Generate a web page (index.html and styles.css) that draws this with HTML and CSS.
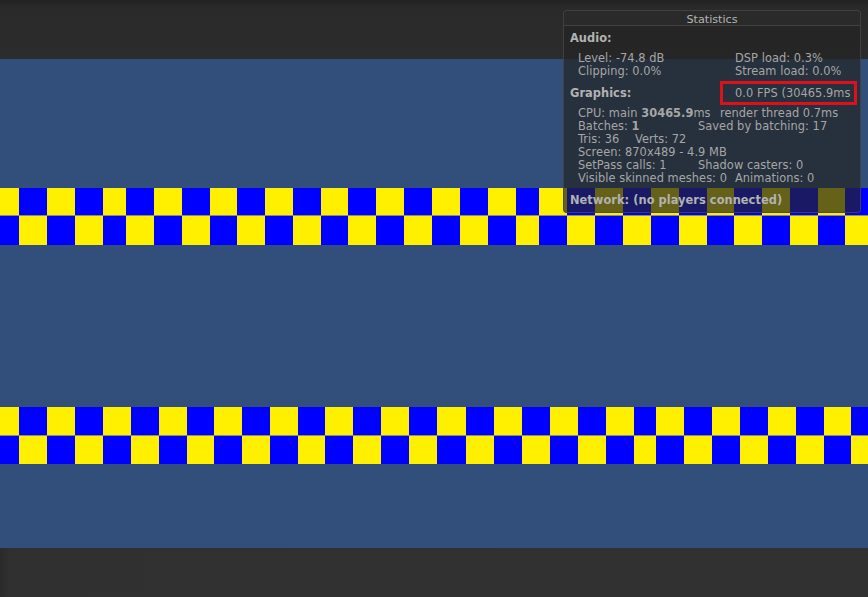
FILE: index.html
```html
<!DOCTYPE html>
<html lang="en">
<head>
<meta charset="utf-8">
<title>Game View - Statistics</title>
<link rel="stylesheet" href="styles.css">
</head>
<body>
<div class="app">
  <div class="topbar"></div>
  <div class="viewport">
    <div class="stripe stripe-a">
      <div class="row row-1"></div>
      <div class="row row-2"></div>
    </div>
    <div class="stripe stripe-b">
      <div class="row row-1"></div>
      <div class="row row-2"></div>
    </div>
  </div>
  <div class="bottombar"></div>

  <div class="stats">
    <div class="stats-title">Statistics</div>
    <div class="stats-body">
      <div class="heading">Audio:</div>
      <div class="block audio">
        <div class="cols cols-audio"><span>Level: -74.8 dB</span><span>DSP load: 0.3%</span></div>
        <div class="cols cols-audio"><span>Clipping: 0.0%</span><span>Stream load: 0.0%</span></div>
      </div>
      <div class="heading-row"><span class="heading">Graphics:</span><span class="fps">0.0 FPS (30465.9ms</span></div>
      <div class="block graphics">
        <div class="cols cols-cpu"><span>CPU: main <b>30465.9</b>ms</span><span>render thread 0.7ms</span></div>
        <div class="cols cols-batch"><span>Batches: <b>1</b></span><span>Saved by batching: 17</span></div>
        <div class="cols cols-tris"><span>Tris: 36</span><span>Verts: 72</span></div>
        <div class="line">Screen: 870x489 - 4.9 MB</div>
        <div class="cols cols-batch"><span>SetPass calls: 1</span><span>Shadow casters: 0</span></div>
        <div class="cols cols-skin"><span>Visible skinned meshes: 0</span><span>Animations: 0</span></div>
      </div>
      <div class="heading network">Network: (no players connected)</div>
    </div>
    <div class="highlight"></div>
  </div>
</div>
</body>
</html>
```

FILE: styles.css
```css
html, body {
  margin: 0;
  padding: 0;
  background: #2b2b2b;
}

.app {
  position: relative;
  width: 868px;
  height: 597px;
  display: flex;
  flex-direction: column;
  overflow: hidden;
  font-family: "DejaVu Sans", "Verdana", sans-serif;
}

.topbar {
  height: 59px;
  background: linear-gradient(to bottom, #222222 0, #2a2a2a 8px, #2c2c2c 100%);
}

.viewport {
  height: 489px;
  background: #314f7a;
  display: flex;
  flex-direction: column;
  padding-top: 129px;
  box-sizing: border-box;
}

.bottombar {
  flex: 1;
  background: linear-gradient(to right, #2a2a2a 0, #303030 10px, #313131 100%);
}

.stripe {
  display: flex;
  flex-direction: column;
  --y: #fff000;
  --b: #0000ff;
}

.stripe-b {
  margin-top: 162px;
}

.row-1 { --c1: var(--y); --c2: var(--b); }
.row-2 { --c1: var(--b); --c2: var(--y); }

.stripe-a .row-1 { height: 27px; border-bottom: 1px solid #8c8c70; }
.stripe-a .row-2 { height: 29px; }
.stripe-b .row-1 { height: 28px; border-bottom: 1px solid #8c8c70; }
.stripe-b .row-2 { height: 28px; }

.stripe-a .row {
  background: linear-gradient(to right,
    var(--c1) 0 19px, var(--c2) 19px 47px, var(--c1) 47px 75px, var(--c2) 75px 103px,
    var(--c1) 103px 126px, var(--c2) 126px 154px, var(--c1) 154px 182px, var(--c2) 182px 210px,
    var(--c1) 210px 237px, var(--c2) 237px 265px, var(--c1) 265px 293px, var(--c2) 293px 321px,
    var(--c1) 321px 348px, var(--c2) 348px 376px, var(--c1) 376px 404px, var(--c2) 404px 432px,
    var(--c1) 432px 460px, var(--c2) 460px 488px, var(--c1) 488px 516px, var(--c2) 516px 539px,
    var(--c1) 539px 567px, var(--c2) 567px 595px, var(--c1) 595px 623px, var(--c2) 623px 651px,
    var(--c1) 651px 679px, var(--c2) 679px 707px, var(--c1) 707px 734px, var(--c2) 734px 762px,
    var(--c1) 762px 790px, var(--c2) 790px 818px, var(--c1) 818px 845px, var(--c2) 845px 868px);
}

.stripe-b .row {
  background: linear-gradient(to right,
    var(--c1) 0 19px, var(--c2) 19px 47px, var(--c1) 47px 75px, var(--c2) 75px 103px,
    var(--c1) 103px 131px, var(--c2) 131px 159px, var(--c1) 159px 187px, var(--c2) 187px 214px,
    var(--c1) 214px 242px, var(--c2) 242px 270px, var(--c1) 270px 298px, var(--c2) 298px 325px,
    var(--c1) 325px 353px, var(--c2) 353px 381px, var(--c1) 381px 409px, var(--c2) 409px 437px,
    var(--c1) 437px 466px, var(--c2) 466px 494px, var(--c1) 494px 522px, var(--c2) 522px 550px,
    var(--c1) 550px 578px, var(--c2) 578px 606px, var(--c1) 606px 634px, var(--c2) 634px 656px,
    var(--c1) 656px 684px, var(--c2) 684px 712px, var(--c1) 712px 740px, var(--c2) 740px 768px,
    var(--c1) 768px 796px, var(--c2) 796px 824px, var(--c1) 824px 851px, var(--c2) 851px 868px);
}

/* Statistics overlay */
.stats {
  position: absolute;
  left: 563px;
  top: 10px;
  width: 298px;
  height: 203px;
  box-sizing: border-box;
  border: 1px solid rgba(70, 70, 70, 0.85);
  border-radius: 4px;
  background: rgba(36, 36, 36, 0.7);
  color: #a6a6a6;
  font-size: 11.4px;
  line-height: 13px;
  letter-spacing: 0.05px;
}

.stats-title {
  height: 14px;
  line-height: 17px;
  text-align: center;
  font-size: 11.2px;
  letter-spacing: 0;
  color: #b4b4b4;
  background: rgba(60, 60, 60, 0.25);
  border-bottom: 1px solid rgba(68, 68, 68, 0.9);
  border-radius: 3px 3px 0 0;
}

.stats-body {
  padding: 6px 6px 0 6px;
  display: flex;
  flex-direction: column;
}

.heading {
  font-weight: bold;
  color: #b2b2b2;
}

.heading-row {
  display: flex;
  margin-top: 9px;
}

.heading-row .heading {
  width: 165px;
  flex: none;
}

.block {
  padding-left: 8px;
  display: flex;
  flex-direction: column;
}

.audio {
  margin-top: 7px;
}

.graphics {
  margin-top: 7px;
}

.cols {
  display: flex;
  white-space: nowrap;
}

.cols > span:first-child {
  flex: none;
}

.cols-audio > span:first-child { width: 157px; }
.cols-cpu > span:first-child { width: 142px; }
.cols-batch > span:first-child { width: 120px; }
.cols-tris > span:first-child { width: 57px; }
.cols-skin > span:first-child { width: 157px; }

.line { white-space: nowrap; }

.network {
  margin-top: 9px;
  white-space: nowrap;
}

.highlight {
  position: absolute;
  left: 156px;
  top: 70px;
  width: 137px;
  height: 24px;
  box-sizing: border-box;
  border: 3px solid #e0101a;
}
```
